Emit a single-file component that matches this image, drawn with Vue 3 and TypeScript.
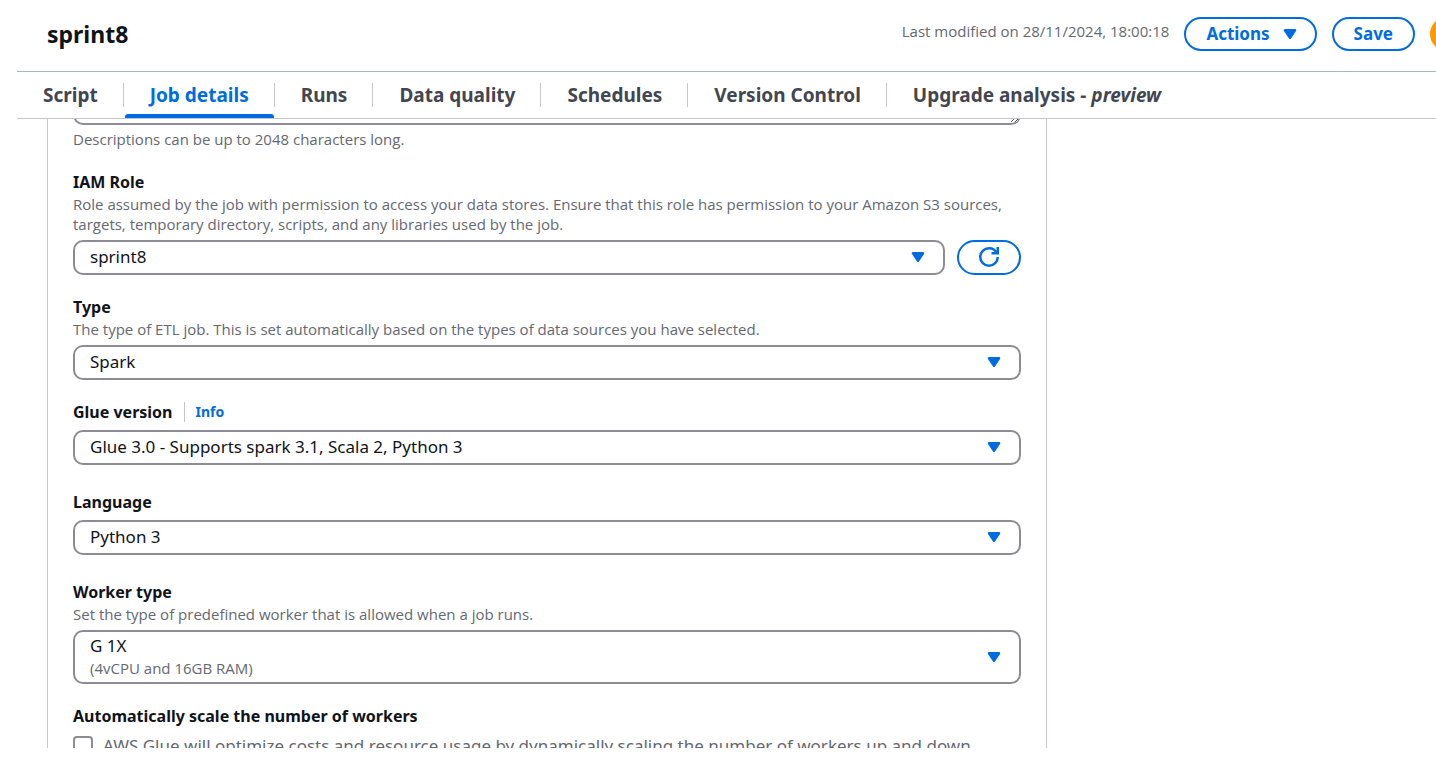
<script setup lang="ts">
import { onMounted, ref } from 'vue'

interface Field {
  id: string
  label: string
  help?: string
  value: string
  detail?: string
  info?: boolean
  refresh?: boolean
  spaced?: boolean
}

const tabs: { name: string; note?: string }[] = [
  { name: 'Script' },
  { name: 'Job details' },
  { name: 'Runs' },
  { name: 'Data quality' },
  { name: 'Schedules' },
  { name: 'Version Control' },
  { name: 'Upgrade analysis - ', note: 'preview' },
]
const activeTab = ref('Job details')

const fields: Field[] = [
  {
    id: 'iam-role',
    label: 'IAM Role',
    help: 'Role assumed by the job with permission to access your data stores. Ensure that this role has permission to your Amazon S3 sources, targets, temporary directory, scripts, and any libraries used by the job.',
    value: 'sprint8',
    refresh: true,
  },
  {
    id: 'job-type',
    label: 'Type',
    help: 'The type of ETL job. This is set automatically based on the types of data sources you have selected.',
    value: 'Spark',
  },
  {
    id: 'glue-version',
    label: 'Glue version',
    value: 'Glue 3.0 - Supports spark 3.1, Scala 2, Python 3',
    info: true,
  },
  { id: 'language', label: 'Language', value: 'Python 3', spaced: true },
  {
    id: 'worker-type',
    label: 'Worker type',
    help: 'Set the type of predefined worker that is allowed when a job runs.',
    value: 'G 1X',
    detail: '(4vCPU and 16GB RAM)',
    spaced: true,
  },
]

const autoScale = ref(false)
const scroller = ref<HTMLElement | null>(null)
const description = ref<HTMLTextAreaElement | null>(null)

// Open with the form scrolled just past the description box.
onMounted(() => {
  const box = description.value
  if (scroller.value && box) {
    scroller.value.scrollTop = box.offsetTop + box.offsetHeight - 6
  }
})
</script>

<template>
  <div class="page">
    <header class="header">
      <h1>sprint8</h1>
      <div class="actions">
        <span class="modified">Last modified on 28/11/2024, 18:00:18</span>
        <button type="button" class="btn menu">
          Actions
          <svg class="icon" viewBox="0 0 16 16" aria-hidden="true">
            <path class="caret" d="M4 5h8l-4 6-4-6Z" />
          </svg>
        </button>
        <button type="button" class="btn">Save</button>
        <button type="button" class="btn primary" aria-label="Run"></button>
      </div>
    </header>

    <nav class="tabs" role="tablist">
      <div v-for="tab in tabs" :key="tab.name" class="tab-item">
        <button
          type="button"
          role="tab"
          class="tab"
          :class="{ active: tab.name === activeTab }"
          :aria-selected="tab.name === activeTab"
          @click="activeTab = tab.name"
        >{{ tab.name }}<em v-if="tab.note">{{ tab.note }}</em></button>
      </div>
    </nav>

    <main ref="scroller" class="scroller">
      <form class="panel" @submit.prevent>
        <textarea ref="description" class="description" aria-label="Description"></textarea>
        <p class="help constraint">Descriptions can be up to 2048 characters long.</p>

        <div v-for="f in fields" :key="f.id" class="field" :class="{ spaced: f.spaced }">
          <div class="label-row">
            <label :for="f.id">{{ f.label }}</label>
            <a v-if="f.info" href="#" class="info">Info</a>
          </div>
          <p v-if="f.help" class="help">{{ f.help }}</p>
          <div class="control-row">
            <div class="select-wrap">
              <select :id="f.id" :class="{ tall: f.detail }">
                <option>{{ f.value }}</option>
              </select>
              <span v-if="f.detail" class="detail">{{ f.detail }}</span>
              <svg class="icon arrow" viewBox="0 0 16 16" aria-hidden="true">
                <path class="caret" d="M4 5h8l-4 6-4-6Z" />
              </svg>
            </div>
            <button v-if="f.refresh" type="button" class="btn refresh" aria-label="Refresh">
              <svg class="icon" viewBox="0 0 16 16" aria-hidden="true">
                <path class="line" d="M10 5h5V0" />
                <path class="line" d="M15 8a6.957 6.957 0 0 1-7 7 6.957 6.957 0 0 1-7-7 6.957 6.957 0 0 1 7-7 6.87 6.87 0 0 1 6.3 4" />
              </svg>
            </button>
          </div>
        </div>

        <div class="field">
          <div class="label-row"><span class="label">Automatically scale the number of workers</span></div>
          <label class="check">
            <input v-model="autoScale" type="checkbox" />
            <span>AWS Glue will optimize costs and resource usage by dynamically scaling the number of workers up and down</span>
          </label>
        </div>
      </form>
    </main>
  </div>
</template>

<style>
body {
  margin: 0;
  background: #fff;
}
</style>

<style scoped>
.page {
  display: flex;
  flex-direction: column;
  box-sizing: border-box;
  height: 100vh;
  padding: 0 0 23px 17px;
  overflow: hidden;
  font-family: 'Noto Sans', 'Open Sans', sans-serif;
  font-size: 17px;
  color: #0f141a;
}
button,
select,
textarea {
  font: inherit;
}
.header {
  display: flex;
  justify-content: space-between;
  box-sizing: border-box;
  height: 72px;
  padding: 17px 0 0 30px;
  border-bottom: 1px solid #aab7b8;
}
h1 {
  margin: 0;
  font-size: 23px;
  font-weight: 700;
  line-height: 34px;
}
.actions {
  display: flex;
  gap: 15px;
  margin-right: -70px;
}
.modified {
  font-family: 'Open Sans', 'Noto Sans', sans-serif;
  font-size: 15px;
  line-height: 28px;
  color: #656871;
  white-space: nowrap;
}
.btn {
  display: flex;
  align-items: center;
  justify-content: center;
  gap: 10px;
  box-sizing: border-box;
  height: 34px;
  padding: 0 20px 1px;
  border: 2px solid #006ce0;
  border-radius: 20px;
  background: #fff;
  color: #006ce0;
  font-weight: 700;
  cursor: pointer;
}
.menu {
  padding-right: 15px;
}
.primary {
  width: 76px;
  border-color: #ff9900;
  background: #ff9900;
  color: #0f141a;
}
.icon {
  width: 20px;
  height: 20px;
  overflow: visible;
}
.caret {
  fill: #006ce0;
  stroke: #006ce0;
  stroke-width: 2;
  stroke-linejoin: round;
}
.line {
  fill: none;
  stroke: #006ce0;
  stroke-width: 2;
}
.tabs {
  display: flex;
  flex: none;
  height: 46px;
  border-bottom: 1px solid #c6c6cd;
}
.tab-item {
  display: flex;
  align-items: center;
}
.tab-item + .tab-item::before {
  content: '';
  width: 1px;
  height: 24px;
  background: #c6c6cd;
}
.tab {
  position: relative;
  height: 46px;
  padding: 0 25px 0 26px;
  border: 0;
  background: none;
  color: #424650;
  font-size: 19px;
  font-weight: 700;
  white-space: pre;
  cursor: pointer;
}
.tab.active {
  color: #006ce0;
}
.tab.active::after {
  content: '';
  position: absolute;
  right: 0;
  bottom: 0;
  left: 1px;
  height: 4px;
  border-radius: 3px 3px 0 0;
  background: #006ce0;
}
.scroller {
  position: relative;
  flex: 1;
  min-height: 0;
  padding-left: 30px;
  overflow-y: auto;
  scrollbar-width: none;
}
.panel {
  box-sizing: border-box;
  max-width: 1000px;
  padding: 20px 25px 60px;
  border: solid #c6c6cd;
  border-width: 0 1px;
}
.description {
  display: block;
  box-sizing: border-box;
  width: 100%;
  height: 100px;
  border: 2px solid #8c8c94;
  border-radius: 10px;
  resize: vertical;
}
.help {
  margin: 0;
  padding-bottom: 1px;
  font-family: 'Open Sans', 'Noto Sans', sans-serif;
  font-size: 15px;
  line-height: 20px;
  color: #656871;
}
.label-row + .help {
  margin-top: -1px;
}
.constraint {
  margin-top: 4px;
}
.field {
  margin-top: 21px;
}
.field.spaced {
  margin-top: 26px;
}
.label-row {
  display: flex;
  align-items: center;
  height: 22px;
  padding-bottom: 2px;
  font-size: 16px;
  line-height: 22px;
  font-weight: 700;
}
.info {
  margin-left: 11px;
  padding-left: 11px;
  border-left: 1px solid #c6c6cd;
  color: #006ce0;
  font-size: 14px;
  line-height: 20px;
  text-decoration: none;
}
.control-row {
  display: flex;
  gap: 12px;
  margin-top: 5px;
}
.select-wrap {
  display: grid;
  flex: 1;
  align-items: center;
}
.select-wrap > * {
  grid-area: 1 / 1;
}
select {
  box-sizing: border-box;
  width: 100%;
  height: 35px;
  padding: 0 46px 2px 15px;
  border: 2px solid #8c8c94;
  border-radius: 10px;
  background: #fff;
  color: #0f141a;
  appearance: none;
}
select.tall {
  height: 54px;
  padding-bottom: 24px;
}
.detail {
  align-self: end;
  padding: 0 0 6px 17px;
  color: #656871;
  font-family: 'Open Sans', 'Noto Sans', sans-serif;
  font-size: 15px;
  line-height: 20px;
  pointer-events: none;
}
.arrow {
  justify-self: end;
  margin: 0 17px 1px 0;
  pointer-events: none;
}
.refresh {
  width: 64px;
  height: 35px;
  padding: 0 0 1px;
}
.check {
  display: flex;
  gap: 10px;
  margin-top: 5px;
  color: #656871;
  line-height: 24px;
}
.check input {
  flex: none;
  box-sizing: border-box;
  width: 20px;
  height: 20px;
  margin: 2px 0 0;
  border: 2px solid #8c8c94;
  border-radius: 4px;
  background: #fff;
  appearance: none;
}
.check input:checked {
  border-color: #006ce0;
  background: #006ce0;
}
</style>
